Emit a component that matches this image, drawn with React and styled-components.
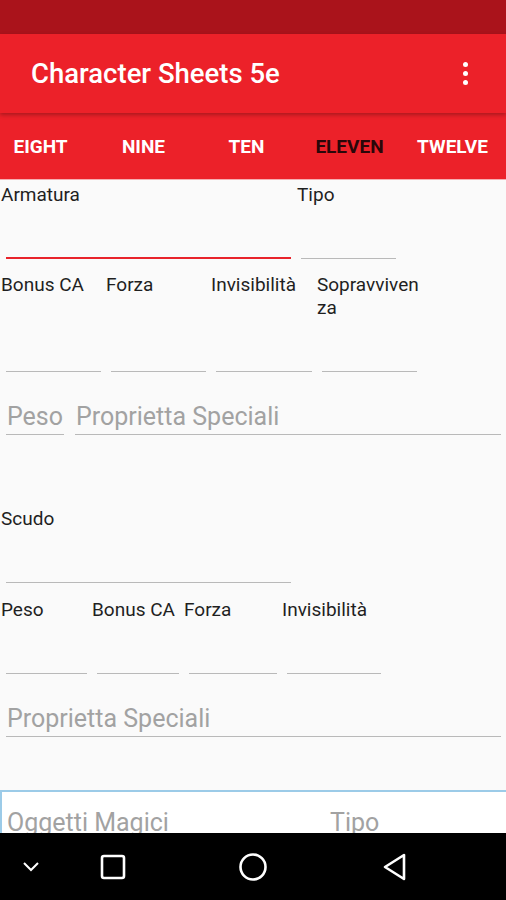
import React from "react";
import styled, { createGlobalStyle } from "styled-components";

const GlobalStyle = createGlobalStyle`
  html, body {
    margin: 0;
    padding: 0;
    background: #fafafa;
  }
  body {
    font-family: Roboto, "Noto Sans", "Liberation Sans", sans-serif;
  }
`;

const Screen = styled.div`
  width: 506px;
  height: 900px;
  display: flex;
  flex-direction: column;
  overflow: hidden;
  background: #fafafa;
`;

const StatusBar = styled.div`
  height: 34px;
  flex: none;
  background: #aa131b;
`;

const AppBar = styled.div`
  height: 79px;
  flex: none;
  display: flex;
  align-items: center;
  justify-content: space-between;
  padding: 0 38px 0 31px;
  background: #ec2129;
  box-shadow: 0 2px 4px rgba(0, 0, 0, 0.28);
  position: relative;
  z-index: 2;
`;

const Title = styled.div`
  color: #fff;
  font-size: 27.5px;
  font-weight: 500;
`;

const MenuDots = styled.div`
  display: flex;
  flex-direction: column;
  gap: 4px;
  span {
    width: 5px;
    height: 5px;
    border-radius: 50%;
    background: #fff;
  }
`;

const TabBar = styled.div`
  height: 66px;
  flex: none;
  background: #ec2129;
  border-bottom: 1px solid #f6aeb1;
  overflow: hidden;
`;

const TabRow = styled.div`
  height: 100%;
  margin-left: -11px;
  display: grid;
  grid-template-columns: repeat(5, 103px);
  align-items: center;
`;

const Tab = styled.div`
  text-align: center;
  font-size: 19px;
  font-weight: 700;
  color: ${(p) => (p.$active ? "#2a0709" : "#fff")};
`;

const Content = styled.div`
  flex: 1;
  overflow: hidden;
  padding-left: 1px;
`;

const Row = styled.div`
  display: flex;
  align-items: stretch;
  margin-top: ${(p) => p.$top || 0}px;
`;

const Cell = styled.div`
  width: ${(p) => p.$w}px;
  flex: none;
  display: flex;
  flex-direction: column;
`;

const Label = styled.div`
  font-size: 19px;
  line-height: 23px;
  color: #1f1f1f;
`;

const Line = styled.div`
  margin-top: auto;
  margin-left: ${(p) => p.$ml ?? 5}px;
  margin-right: ${(p) => p.$mr ?? 5}px;
  height: ${(p) => (p.$focused ? 51 : 52)}px;
  border-bottom: ${(p) =>
    p.$focused ? "2px solid #e8232b" : "1px solid #b9b9b9"};
`;

const HintRow = styled.div`
  display: flex;
  margin-top: ${(p) => p.$top || 0}px;
  padding-right: 5px;
`;

const HintInput = styled.div`
  margin-left: ${(p) => p.$ml ?? 5}px;
  width: ${(p) => (p.$w ? p.$w + "px" : "auto")};
  flex: ${(p) => (p.$w ? "none" : 1)};
  padding: 0 0 3px 1px;
  font-size: 25px;
  line-height: 28px;
  color: #a2a2a2;
  white-space: nowrap;
  border-bottom: 1px solid #b9b9b9;
`;

const MagicBox = styled.div`
  margin: 53px 0 0 -1px;
  height: 60px;
  background: #fff;
  border-top: 2px solid #9ccbe8;
  border-left: 2px solid #9ccbe8;
  display: flex;
  padding: 17px 0 0 5px;
  box-sizing: border-box;
`;

const MagicHint = styled.div`
  width: ${(p) => p.$w}px;
  flex: none;
  font-size: 25px;
  line-height: 28px;
  color: #a2a2a2;
`;

const NavBar = styled.div`
  height: 67px;
  flex: none;
  background: #000;
  display: flex;
  align-items: center;
`;

const NavSlot = styled.div`
  width: ${(p) => p.$w}px;
  flex: none;
  display: flex;
  justify-content: center;
`;

export default function App() {
  return (
    <Screen>
      <GlobalStyle />
      <StatusBar />
      <AppBar>
        <Title>Character Sheets 5e</Title>
        <MenuDots>
          <span />
          <span />
          <span />
        </MenuDots>
      </AppBar>
      <TabBar>
        <TabRow>
          <Tab>EIGHT</Tab>
          <Tab>NINE</Tab>
          <Tab>TEN</Tab>
          <Tab $active>ELEVEN</Tab>
          <Tab>TWELVE</Tab>
        </TabRow>
      </TabBar>

      <Content>
        <Row $top={3}>
          <Cell $w={296}>
            <Label>Armatura</Label>
            <Line $focused $mr={6} />
          </Cell>
          <Cell $w={100}>
            <Label>Tipo</Label>
            <Line $ml={4} $mr={1} />
          </Cell>
        </Row>

        <Row $top={14}>
          <Cell $w={105}>
            <Label>Bonus CA</Label>
            <Line />
          </Cell>
          <Cell $w={105}>
            <Label>Forza</Label>
            <Line />
          </Cell>
          <Cell $w={106}>
            <Label>Invisibilità</Label>
            <Line />
          </Cell>
          <Cell $w={105}>
            <Label>
              Sopravviven<wbr />za
            </Label>
            <Line />
          </Cell>
        </Row>

        <HintRow $top={31}>
          <HintInput $w={57}>Peso</HintInput>
          <HintInput $ml={11}>Proprietta Speciali</HintInput>
        </HintRow>

        <Row $top={72}>
          <Cell $w={296}>
            <Label>Scudo</Label>
            <Line $mr={6} />
          </Cell>
        </Row>

        <Row $top={15}>
          <Cell $w={91}>
            <Label>Peso</Label>
            <Line />
          </Cell>
          <Cell $w={92}>
            <Label>Bonus CA</Label>
            <Line />
          </Cell>
          <Cell $w={98}>
            <Label>Forza</Label>
            <Line />
          </Cell>
          <Cell $w={104}>
            <Label>Invisibilità</Label>
            <Line />
          </Cell>
        </Row>

        <HintRow $top={31}>
          <HintInput>Proprietta Speciali</HintInput>
        </HintRow>

        <MagicBox>
          <MagicHint $w={323}>Oggetti Magici</MagicHint>
          <MagicHint $w={120}>Tipo</MagicHint>
        </MagicBox>
      </Content>

      <NavBar>
        <NavSlot $w={62}>
          <svg width="18" height="12" viewBox="0 0 18 12">
            <path d="M2 2 L9 9 L16 2" fill="none" stroke="#fff" strokeWidth="2" />
          </svg>
        </NavSlot>
        <NavSlot $w={102}>
          <svg width="26" height="26" viewBox="0 0 26 26">
            <rect x="2" y="2" width="22" height="22" rx="2" fill="none" stroke="#fff" strokeWidth="2.6" />
          </svg>
        </NavSlot>
        <NavSlot $w={178}>
          <svg width="30" height="30" viewBox="0 0 30 30">
            <circle cx="15" cy="15" r="12.5" fill="none" stroke="#fff" strokeWidth="2.6" />
          </svg>
        </NavSlot>
        <NavSlot $w={105}>
          <svg width="26" height="30" viewBox="0 0 26 30">
            <path d="M22 3 L22 27 L3 15 Z" fill="none" stroke="#fff" strokeWidth="2.6" strokeLinejoin="round" />
          </svg>
        </NavSlot>
      </NavBar>
    </Screen>
  );
}
